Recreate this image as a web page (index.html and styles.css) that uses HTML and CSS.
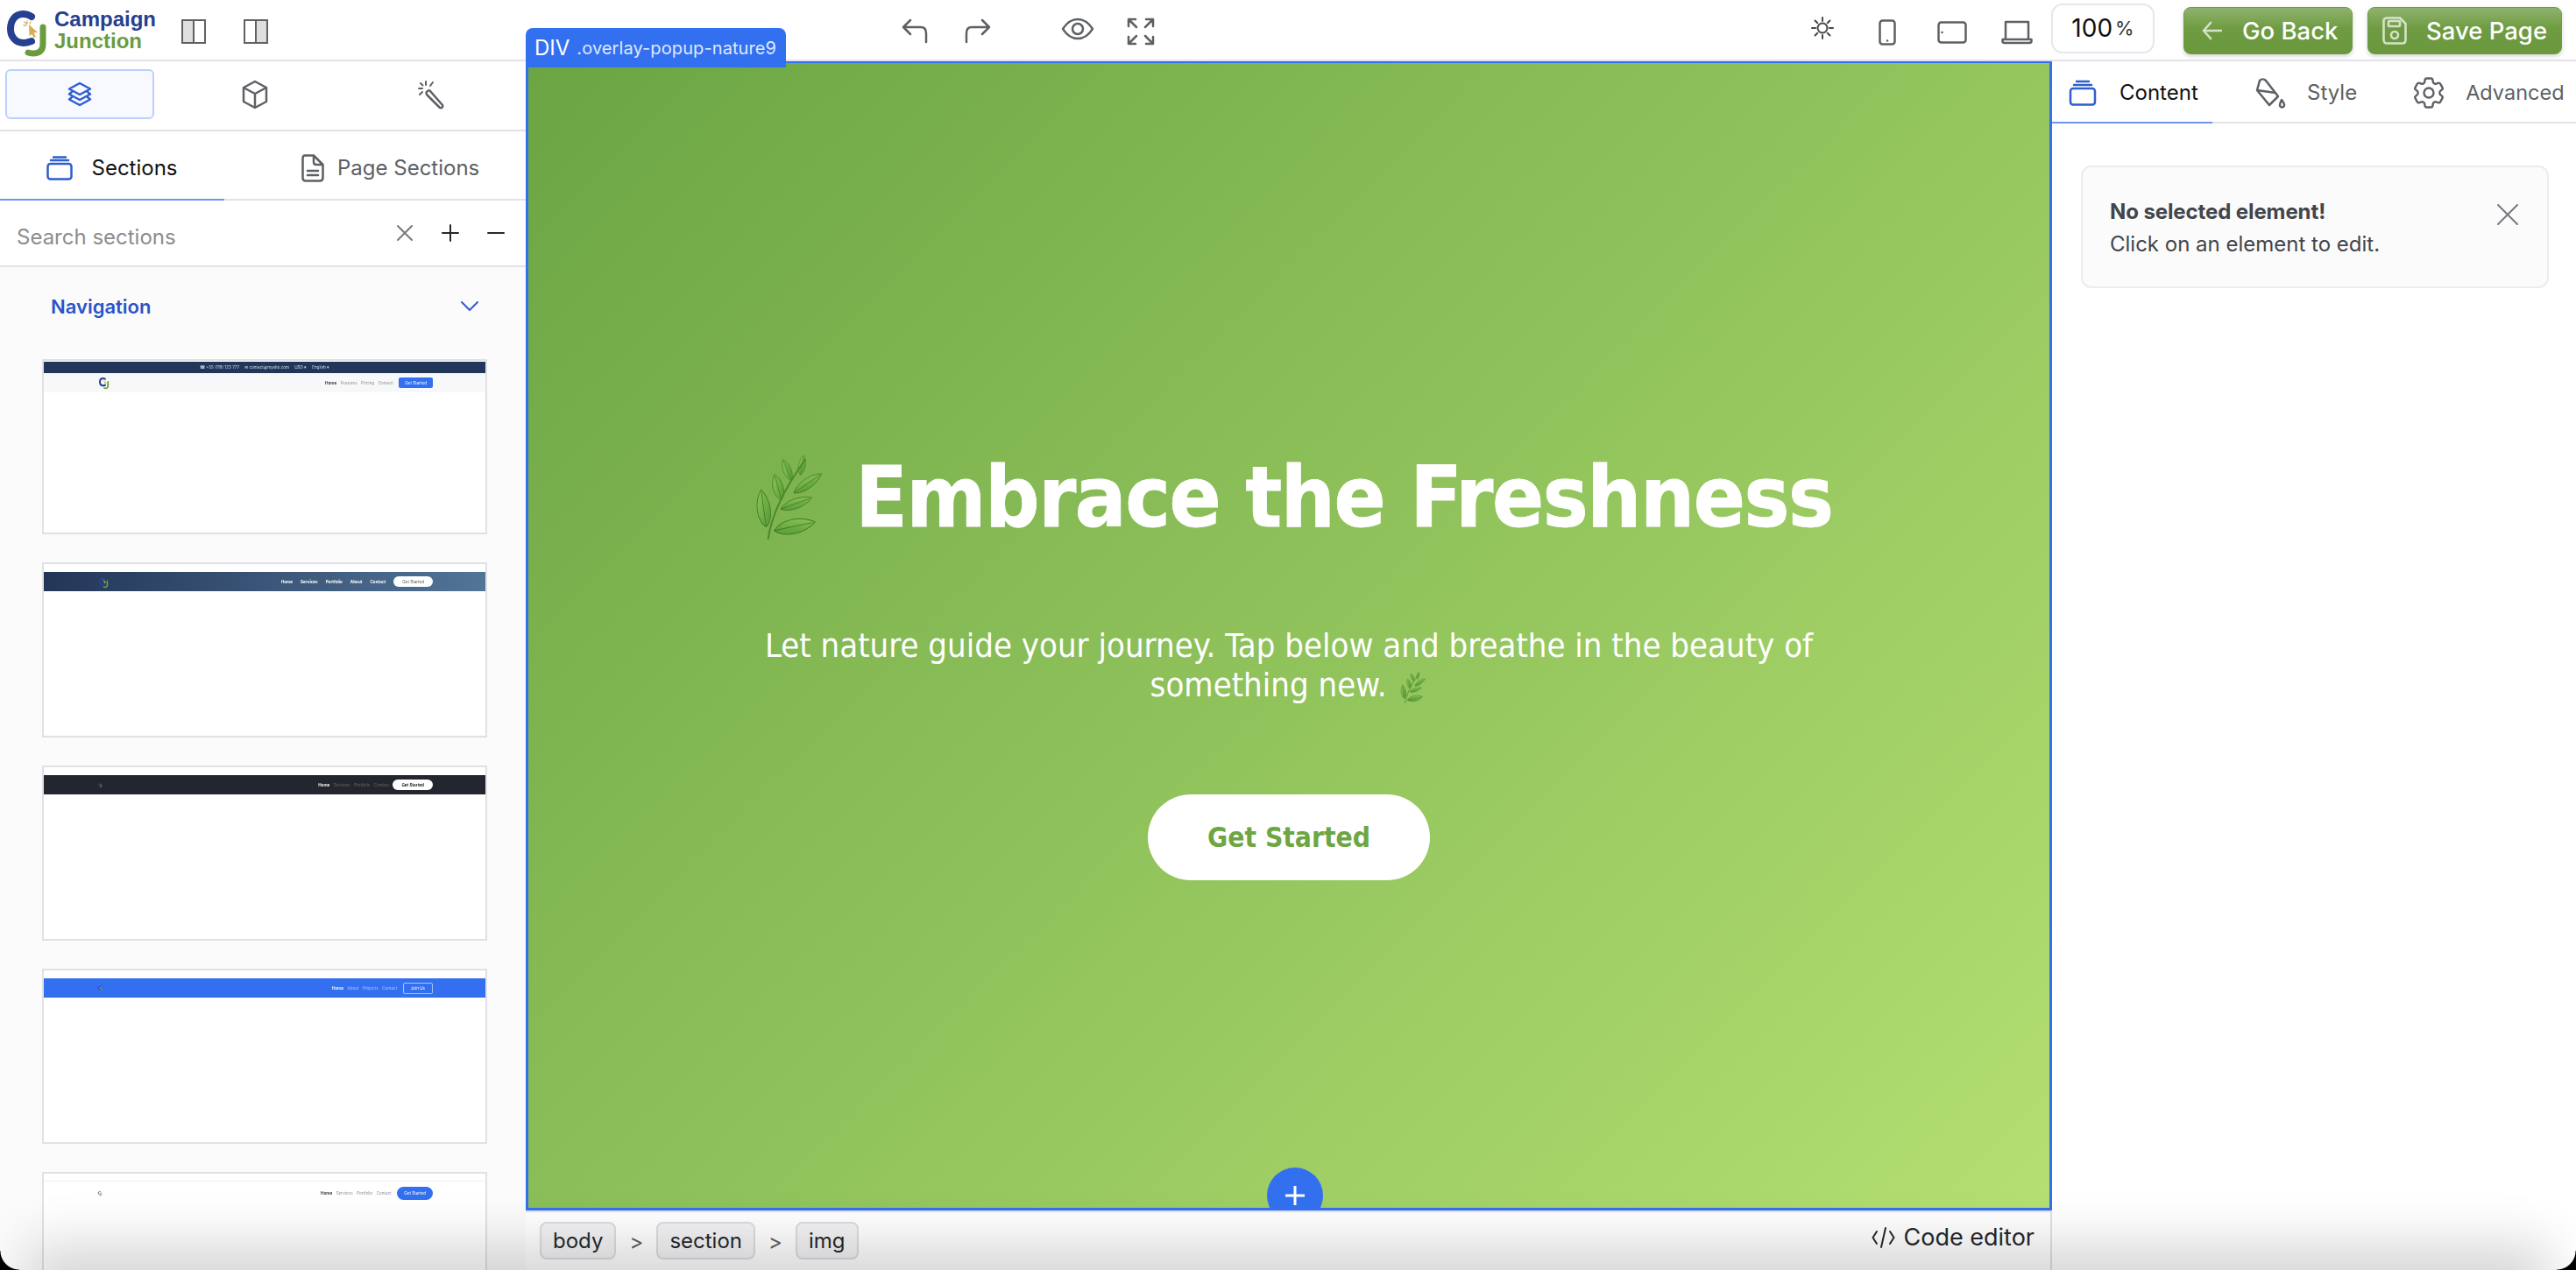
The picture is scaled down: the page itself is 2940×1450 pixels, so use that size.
FILE: index.html

```html
<!DOCTYPE html>
<html lang="en">
<head>
    <meta charset="UTF-8">
    <title>Campaign Junction - Page Builder</title>
    <link rel="stylesheet" href="styles.css">
</head>
<body>
    <svg class="sprite" aria-hidden="true">
        <defs>
            <symbol id="cj-mark" viewBox="0 0 60 62">
                <path d="M36 14 C32 11 29 11 26 11 C17 11 12 19 12 28 C12 37 18 44 27 44 C30 44 33 43 36 42" fill="none" stroke="#25408f" stroke-width="8" stroke-linecap="round"/>
                <path d="M49 26 V46 C49 54 42 58 32 55" fill="none" stroke="#6a9c3f" stroke-width="7" stroke-linecap="round"/>
                <path d="M33 23 L43 32 L38.500 32.500 L41 37 L38.500 38 L36.500 34 L33.500 36 Z" fill="#d9ae4e"/>
                <path d="M31 19 V22 M27 24 H30 M28 20 L30 22 M35 20 L34 22" stroke="#d9ae4e" stroke-width="1.300" stroke-linecap="round"/>
            </symbol>
            <linearGradient id="leaf-fill" x1="0" y1="0" x2="1" y2="1">
                <stop offset="0" stop-color="#92cb5c"/>
                <stop offset="1" stop-color="#4f9330"/>
            </linearGradient>
            <path id="leaf" d="M0 0 C8 -6 9 -20 0 -30 C-9 -20 -8 -6 0 0Z M0 0 V-28" fill="url(#leaf-fill)" stroke="#3d7a23" stroke-width=".7"/>
            <symbol id="herb" viewBox="0 0 90 94">
                <use href="#leaf" transform="translate(24 80) rotate(-8) scale(1.150 1.400)"/>
                <use href="#leaf" transform="translate(33 84) rotate(78) scale(1.250 1.550)"/>
                <use href="#leaf" transform="translate(40 60) rotate(70) scale(.85 1.250)"/>
                <use href="#leaf" transform="translate(41 50) rotate(-15) scale(.9 1)"/>
                <use href="#leaf" transform="translate(55 42) rotate(55) scale(.85 1.250)"/>
                <use href="#leaf" transform="translate(52 28) rotate(-22) scale(.7 .85)"/>
                <use href="#leaf" transform="translate(62 22) rotate(10) scale(.6 .75)"/>
                <path d="M26 94 C29 70 42 40 68 4" fill="none" stroke="#4d8a2b" stroke-width="2"/>
            </symbol>
        </defs>
    </svg>

    <div class="app">
        <header class="topbar">
            <div class="top-left">
                <svg class="logo-mark" width="60" height="62"><use href="#cj-mark"/></svg>
                <div class="logo-text"><span class="logo-c">Campaign</span><span class="logo-j">Junction</span></div>
                <div class="panel-toggles">
                    <div class="toggle-cell">
                        <svg width="30" height="30" viewBox="0 0 30 30"><rect x="2" y="2" width="13" height="26" fill="#dedede"/><rect x="2" y="2" width="26" height="26" fill="none" stroke="#5f6265" stroke-width="2"/><path d="M15 2V28" stroke="#5f6265" stroke-width="2"/></svg>
                    </div>
                    <div class="toggle-cell">
                        <svg width="30" height="30" viewBox="0 0 30 30"><rect x="15" y="2" width="13" height="26" fill="#dedede"/><rect x="2" y="2" width="26" height="26" fill="none" stroke="#5f6265" stroke-width="2"/><path d="M15 2V28" stroke="#5f6265" stroke-width="2"/></svg>
                    </div>
                </div>
            </div>
            <div class="top-center">
                <div class="icon-group">
                    <div class="top-cell"><svg width="32" height="30" viewBox="0 0 32 30" class="line-icon"><path d="M11 3 L3 11 L11 19 M3 11 H23 C27 11 29 14 29 18 V28"/></svg></div>
                    <div class="top-cell"><svg width="32" height="30" viewBox="0 0 32 30" class="line-icon"><path d="M21 3 L29 11 L21 19 M29 11 H9 C5 11 3 14 3 18 V28"/></svg></div>
                </div>
                <div class="icon-group">
                    <div class="top-cell"><svg width="38" height="26" viewBox="0 0 38 26" class="line-icon"><path d="M2 13 C8 4 13 2 19 2 C25 2 30 4 36 13 C30 22 25 24 19 24 C13 24 8 22 2 13Z"/><circle cx="19" cy="13" r="6"/></svg></div>
                    <div class="top-cell"><svg width="32" height="32" viewBox="0 0 32 32" class="line-icon"><path d="M2 10 V2 H10 M2 2 L11 11 M22 2 H30 V10 M30 2 L21 11 M2 22 V30 H10 M2 30 L11 21 M30 22 V30 H22 M30 30 L21 21"/></svg></div>
                </div>
            </div>
            <div class="top-right">
                <div class="device-cell sun-cell"><svg width="28" height="28" viewBox="0 0 28 28" class="thin-icon"><circle cx="14" cy="14" r="5.500"/><path d="M14 2V6 M14 22V26 M2 14H6 M22 14H26 M5.500 5.500L8.300 8.300 M19.700 19.700L22.500 22.500 M5.500 22.500L8.300 19.700 M19.700 8.300L22.500 5.500"/></svg></div>
                <div class="device-cell"><svg width="20" height="30" viewBox="0 0 20 30" class="device-icon"><rect x="1.500" y="1.500" width="17" height="27" rx="3"/><path d="M10 24.500V24.600"/></svg></div>
                <div class="device-cell"><svg width="34" height="26" viewBox="0 0 34 26" class="device-icon"><rect x="1.500" y="1.500" width="31" height="23" rx="3"/><path d="M5.500 13V13.100"/></svg></div>
                <div class="device-cell"><svg width="36" height="28" viewBox="0 0 36 28" class="device-icon"><path d="M5 21 V2 H31 V21 M1.500 22 H34.500 V24 C34.500 25.500 33.500 26 32 26 H4 C2.500 26 1.500 25.500 1.500 24Z"/></svg></div>
                <div class="zoom-box"><span class="zoom-num">100</span><span class="zoom-pct">%</span></div>
                <button class="green-btn back-btn">
                    <svg width="24" height="24" viewBox="0 0 24 24" class="btn-icon"><path d="M11 3 L3 12 L11 21 M3 12 H23"/></svg>
                    Go Back
                </button>
                <button class="green-btn save-btn">
                    <svg width="28" height="32" viewBox="0 0 28 32" class="btn-icon"><path d="M5 1.500 H20 L26.500 8 V26 C26.500 29 25 30.500 23 30.500 H5 C3 30.500 1.500 29 1.500 26 V5 C1.500 3 3 1.500 5 1.500Z"/><rect x="7" y="5" width="13" height="6" rx="1"/><circle cx="14" cy="21" r="4"/></svg>
                    Save Page
                </button>
            </div>
        </header>

        <div class="workspace">
            <aside class="sidebar">
                <div class="mode-bar">
                    <div class="mode-btn active">
                        <svg width="32" height="32" viewBox="0 0 32 32" class="blue-icon"><path d="M16 3 L28 9.500 L16 16 L4 9.500Z M7 13 L4 15.500 L16 22 L28 15.500 L25 13 M7 19 L4 21.500 L16 28 L28 21.500 L25 19"/></svg>
                    </div>
                    <div class="mode-btn">
                        <svg width="32" height="34" viewBox="0 0 32 34" class="line-icon"><path d="M16 2 L29 9 V25 L16 32 L3 25 V9Z M3 9 L16 16 L29 9 M16 16 V32"/></svg>
                    </div>
                    <div class="mode-btn">
                        <svg width="32" height="34" viewBox="0 0 32 34" class="line-icon wand"><path d="M12 14 C13 12 15 12 16 13 L30 29 C31 31 29 33 27 32 L13 18 C12 17 11 15 12 14Z"/><path d="M11 2V6 M3 10H7 M5 4L7.500 6.500 M19 3L16 7 M4 17L7 14"/></svg>
                    </div>
                </div>

                <div class="side-tabs">
                    <div class="side-tab selected">
                        <svg width="30" height="28" viewBox="0 0 30 28" class="blue-icon"><rect x="1.500" y="9" width="27" height="17.500" rx="3"/><path d="M5 5H25 M8 1.500H22"/></svg>
                        <span>Sections</span>
                    </div>
                    <div class="side-tab">
                        <svg width="26" height="32" viewBox="0 0 26 32" class="line-icon"><path d="M4 1.500 H14 L24.500 12 V27 C24.500 29.500 23 30.500 21 30.500 H5 C3 30.500 1.500 29.500 1.500 27 V5 C1.500 3 2.500 1.500 4 1.500Z M14 1.500 V9 C14 11 15 12 17 12 H24.500 M7 19 H19 M7 24 H19"/></svg>
                        <span>Page Sections</span>
                    </div>
                </div>

                <div class="search-row">
                    <span class="search-text">Search sections</span>
                    <div class="search-actions">
                        <svg width="20" height="20" viewBox="0 0 20 20" class="thin-icon grey"><path d="M2 2L18 18 M18 2L2 18"/></svg>
                        <svg width="20" height="20" viewBox="0 0 20 20" class="thin-icon dark"><path d="M10 1V19 M1 10H19"/></svg>
                        <svg width="20" height="20" viewBox="0 0 20 20" class="thin-icon dark"><path d="M1 10H19"/></svg>
                    </div>
                </div>

                <div class="section-list">
                    <div class="group-head">
                        <span>Navigation</span>
                        <svg width="20" height="12" viewBox="0 0 20 12" class="thin-icon blue"><path d="M1 1L10 10L19 1"/></svg>
                    </div>

                    <div class="thumb">
                        <div class="mini-top">
                            <span>&#9742; +55 (119) 123 777</span><span>&#9993; contact@mysite.com</span><span>USD &#9662;</span><span>English &#9662;</span>
                        </div>
                        <div class="mini-nav light">
                            <svg class="mini-logo" width="15" height="16"><use href="#cj-mark"/></svg>
                            <div class="mini-links">
                                <b>Home</b><span>Features</span><span>Pricing</span><span>Contact</span>
                                <em class="mini-btn square">Get Started</em>
                            </div>
                        </div>
                    </div>

                    <div class="thumb">
                        <div class="mini-nav gradient spaced">
                            <svg class="mini-logo" width="14" height="15"><use href="#cj-mark"/></svg>
                            <div class="mini-links wide">
                                <b>Home</b><b>Services</b><b>Portfolio</b><b>About</b><b>Contact</b>
                                <em class="mini-btn white">Get Started</em>
                            </div>
                        </div>
                    </div>

                    <div class="thumb">
                        <div class="mini-nav dark spaced">
                            <svg class="mini-logo" width="6" height="7"><use href="#cj-mark"/></svg>
                            <div class="mini-links">
                                <b>Home</b><span>Services</span><span>Portfolio</span><span>Contact</span>
                                <em class="mini-btn white strong">Get Started</em>
                            </div>
                        </div>
                    </div>

                    <div class="thumb">
                        <div class="mini-nav blue spaced">
                            <svg class="mini-logo" width="6" height="7"><use href="#cj-mark"/></svg>
                            <div class="mini-links">
                                <b>Home</b><span>About</span><span>Projects</span><span>Contact</span>
                                <em class="mini-btn outline">Join Us</em>
                            </div>
                        </div>
                    </div>

                    <div class="thumb">
                        <div class="mini-nav plain spaced">
                            <svg class="mini-logo" width="6" height="7"><use href="#cj-mark"/></svg>
                            <div class="mini-links">
                                <b>Home</b><span>Services</span><span>Portfolio</span><span>Contact</span>
                                <em class="mini-btn pill">Get Started</em>
                            </div>
                        </div>
                    </div>
                </div>
            </aside>

            <main class="canvas-col">
                <div class="stage">
                    <h1 class="hero-title"><svg class="herb-big" width="92" height="96"><use href="#herb"/></svg>Embrace the Freshness</h1>
                    <p class="hero-text">Let nature guide your journey. Tap below and breathe in the beauty of something new. <svg class="herb-small" width="36" height="36"><use href="#herb"/></svg></p>
                    <a class="hero-btn">Get Started</a>
                    <div class="add-btn"><svg width="26" height="26" viewBox="0 0 26 26"><path d="M13 2V24 M2 13H24" stroke="#fff" stroke-width="3"/></svg></div>
                </div>
                <div class="path-bar">
                    <span class="chip">body</span><span class="sep">&gt;</span>
                    <span class="chip">section</span><span class="sep">&gt;</span>
                    <span class="chip">img</span>
                    <div class="code-link">
                        <svg width="27" height="28" viewBox="0 0 27 28" class="thin-icon dark"><path d="M6 7L1.500 14L6 21 M21 7L25.500 14L21 21 M16 3L11 25"/></svg>
                        Code editor
                    </div>
                </div>
                <div class="tag-label"><span class="tag-name">DIV</span><span class="tag-class">.overlay-popup-nature9</span></div>
            </main>

            <aside class="props">
                <div class="props-tabs">
                    <div class="props-tab selected">
                        <svg width="32" height="30" viewBox="0 0 32 30" class="blue-icon"><rect x="2" y="10" width="28" height="18.500" rx="3"/><path d="M6 6H26 M9 2H23"/></svg>
                        <span>Content</span>
                    </div>
                    <div class="props-tab style-tab">
                        <svg width="36" height="36" viewBox="0 0 36 36" class="line-icon"><path d="M6 4 L3 15 L17 32 L27 22 L13 4 C11 2 8 2 6 4Z M3 15 L24 18"/><path d="M31 26 C34 30 35 32 33 34 C31 35 29 34 29 32 C29 30 30 28 31 26Z"/></svg>
                        <span>Style</span>
                    </div>
                    <div class="props-tab adv-tab">
                        <svg width="44" height="44" viewBox="0 0 24 24" class="gear-icon"><path d="M9.594 3.94c.09-.542.56-.94 1.11-.94h2.593c.55 0 1.02.398 1.11.94l.213 1.281c.063.374.313.686.645.87.074.04.147.083.22.127.325.196.72.257 1.075.124l1.217-.456a1.125 1.125 0 0 1 1.37.49l1.296 2.247a1.125 1.125 0 0 1-.26 1.431l-1.003.827c-.293.241-.438.613-.43.992a7.723 7.723 0 0 1 0 .255c-.008.378.137.75.43.991l1.004.827c.424.35.534.955.26 1.43l-1.298 2.247a1.125 1.125 0 0 1-1.369.491l-1.217-.456c-.355-.133-.75-.072-1.076.124a6.47 6.47 0 0 1-.22.128c-.331.183-.581.495-.644.869l-.213 1.281c-.09.543-.56.94-1.11.94h-2.594c-.55 0-1.019-.398-1.11-.94l-.213-1.281c-.062-.374-.312-.686-.644-.87a6.52 6.52 0 0 1-.22-.127c-.325-.196-.72-.257-1.076-.124l-1.217.456a1.125 1.125 0 0 1-1.369-.49l-1.297-2.247a1.125 1.125 0 0 1 .26-1.431l1.004-.827c.292-.24.437-.613.43-.991a6.932 6.932 0 0 1 0-.255c.007-.38-.138-.751-.43-.992l-1.004-.827a1.125 1.125 0 0 1-.26-1.43l1.297-2.247a1.125 1.125 0 0 1 1.37-.491l1.216.456c.356.133.751.072 1.076-.124.072-.044.146-.086.22-.128.332-.183.582-.495.644-.869l.214-1.28Z"/><circle cx="12" cy="12" r="3"/></svg>
                        <span>Advanced</span>
                    </div>
                </div>
                <div class="notice">
                    <div>
                        <strong>No selected element!</strong>
                        <p>Click on an element to edit.</p>
                    </div>
                    <svg width="26" height="26" viewBox="0 0 26 26" class="thin-icon grey"><path d="M2 2L24 24 M24 2L2 24"/></svg>
                </div>
            </aside>
        </div>

        <div class="edge-shadow"></div>
        <div class="corner corner-left"></div>
        <div class="corner corner-right"></div>
    </div>
</body>
</html>
```

FILE: styles.css

```css
* { box-sizing: border-box; }
html, body { margin: 0; height: 100%; overflow: hidden; background: #fff; }
body { font-family: Inter, "Liberation Sans", sans-serif; color: #111; }
.sprite { position: absolute; width: 0; height: 0; }

.app { position: relative; width: 2940px; height: 1450px; overflow: hidden; display: flex; flex-direction: column; }

.line-icon { fill: none; stroke: #5d6064; stroke-width: 2.500; stroke-linecap: round; stroke-linejoin: round; }
.line-icon.wand path:last-child { stroke-width: 2; }
.blue-icon { fill: none; stroke: #2f5ecf; stroke-width: 2.500; stroke-linecap: round; stroke-linejoin: round; }
.device-icon { fill: none; stroke: #5d6064; stroke-width: 2.500; stroke-linecap: round; stroke-linejoin: round; }
.gear-icon { fill: none; stroke: #5d6064; stroke-width: 1.300; stroke-linecap: round; stroke-linejoin: round; }
.thin-icon { fill: none; stroke: #44474b; stroke-width: 2; stroke-linecap: round; stroke-linejoin: round; }
.thin-icon.grey { stroke: #77797d; }
.thin-icon.dark { stroke: #26282b; }
.thin-icon.blue { stroke: #2f5ecf; }

/* top bar */
.topbar { height: 70px; flex: none; display: flex; align-items: center; border-bottom: 2px solid #e2e2e8; background: #fff; }
.top-left { width: 1008px; display: flex; align-items: center; }
.logo-mark { margin-top: 4px; }
.logo-text { display: flex; flex-direction: column; margin-left: 2px; font-family: "Liberation Sans", sans-serif; font-weight: 700; font-size: 24px; line-height: 25px; }
.logo-c { color: #25408f; }
.logo-j { color: #6a9c3f; }
.panel-toggles { display: flex; margin-left: 7px; padding-top: 3px; }
.toggle-cell { width: 71px; display: flex; justify-content: center; }
.top-center { display: flex; gap: 42px; padding-top: 3px; }
.icon-group { display: flex; }
.top-cell { width: 72px; display: flex; justify-content: center; }
.top-right { margin-left: auto; padding-right: 16px; display: flex; align-items: center; }
.device-cell { width: 74px; display: flex; justify-content: center; padding-top: 6px; }
.sun-cell { padding-top: 0; padding-bottom: 4px; }
.zoom-box { width: 118px; height: 57px; margin-left: 2px; margin-top: -4px; border: 2px solid #e6e6eb; border-radius: 13px; display: flex; align-items: center; justify-content: center; gap: 3px; }
.zoom-num { font-size: 28px; }
.zoom-pct { font-size: 22px; color: #333; }
.green-btn { height: 54px; margin-top: 2px; border: 1px solid #6e9c44; border-radius: 8px; color: #fff; font-family: Inter, sans-serif; font-size: 27.500px; font-weight: 500; display: flex; align-items: center; background: linear-gradient(#8fb26c, #6f9c42 45%, #6a983d); box-shadow: 0 2px 5px rgba(0, 0, 0, .18); }
.back-btn { width: 193px; margin-left: 33px; padding: 0 0 0 19px; gap: 23px; }
.save-btn { width: 222px; margin-left: 17px; padding: 0 0 0 16px; gap: 22px; }
.btn-icon { fill: none; stroke: #d5e2c7; stroke-width: 2.600; stroke-linecap: round; stroke-linejoin: round; }

/* main columns */
.workspace { flex: 1; min-height: 0; display: grid; grid-template-columns: 600px 1742px 598px; }

/* left sidebar */
.sidebar { display: flex; flex-direction: column; min-height: 0; overflow: hidden; }
.mode-bar { height: 80px; flex: none; display: grid; grid-template-columns: repeat(3, 170px); gap: 30px; padding: 9px 0 0 6px; border-bottom: 2px solid #e2e2e8; }
.mode-btn { height: 57px; display: flex; align-items: center; justify-content: center; border: 2px solid transparent; border-radius: 6px; }
.mode-btn.active { background: #f7f9ff; border-color: #bcd0fb; }
.side-tabs { height: 79px; flex: none; display: grid; grid-template-columns: 256px 1fr; border-bottom: 2px solid #e2e2e8; }
.side-tab { display: flex; align-items: center; justify-content: center; gap: 21px; padding-top: 6px; font-size: 24px; color: #5d6064; margin-bottom: -2px; border-bottom: 2px solid transparent; }
.side-tab.selected { color: #111; border-bottom-color: #6d94f2; }
.side-tab:last-child { gap: 15px; justify-content: flex-start; padding-left: 88px; }
.search-row { height: 76px; flex: none; display: flex; align-items: center; justify-content: space-between; padding: 0 24px 0 19px; border-bottom: 2px solid #e2e2e8; }
.search-text { font-size: 24px; color: #8b8d90; margin-top: 8px; }
.search-actions { display: flex; gap: 32px; }
.section-list { flex: 1; background: #fbfbfc; padding-left: 48px; }
.group-head { width: 498px; height: 90px; margin-bottom: 15px; padding: 0 0 0 10px; display: flex; align-items: center; justify-content: space-between; color: #2a55c8; font-size: 22px; font-weight: 600; }
.thumb { width: 508px; height: 200px; margin-bottom: 32px; background: #fff; border: 2px solid #e0e0e6; padding-top: 7px; }

/* navbars inside the thumbnails */
.mini-top { height: 13px; display: flex; justify-content: center; align-items: center; gap: 6px; font-size: 4.600px; color: #d8deea; background: #22365a; filter: blur(.3px); margin-top: -6px; white-space: nowrap; }
.mini-nav { height: 22px; display: flex; align-items: center; justify-content: space-between; padding: 0 60px 0 61px; filter: blur(.3px); }
.mini-nav.spaced { margin-top: 2px; }
.mini-links { display: flex; align-items: center; gap: 4.500px; font-size: 4.600px; color: #8d9096; white-space: nowrap; }
.mini-links.wide { gap: 9px; color: #fff; }
.mini-links b { color: #3a3d42; }
.mini-links em { font-style: normal; }
.mini-btn { margin-left: 2px; padding: 2px 7px; border-radius: 6px; color: #fff; }
.mini-nav.light { background: #f6f8fa; }
.mini-btn.square { background: #3370f0; border-radius: 2px; padding: 3.500px 7px; }
.mini-nav.gradient { background: linear-gradient(100deg, #223557, #527598); }
.mini-nav.gradient .mini-links b { color: #fff; }
.mini-btn.white { background: #fff; color: #555; margin-left: 0; padding: 3.500px 10px; border-radius: 7px; }
.mini-btn.strong { color: #222; font-weight: 700; }
.mini-nav.dark { background: #23262e; margin-top: 2px; }
.mini-nav.dark .mini-links { color: #666; }
.mini-nav.dark .mini-links b { color: #eee; }
.mini-nav.blue { background: #3370f0; }
.mini-nav.blue .mini-links { color: #a9c4f8; }
.mini-nav.blue .mini-links b { color: #e8efff; }
.mini-btn.outline { border: 1px solid #a9c4f8; border-radius: 2px; color: #fff; padding: 3px 8px; }
.mini-nav.plain { border-top: 1px solid #eef0f2; height: 28px; margin-top: 1px; }
.mini-btn.pill { background: #3370f0; padding: 5px 8px; border-radius: 8px; }

/* canvas */
.canvas-col { position: relative; display: flex; flex-direction: column; min-height: 0; }
.stage { position: relative; flex: 1; min-height: 0; display: flex; flex-direction: column; align-items: center; padding-top: 441px; border: 3px solid #3370f0; border-top-width: 2px; background: linear-gradient(135deg, #6ba544, #b4df72); color: #fff; font-family: "DejaVu Sans", sans-serif; }
.hero-title { margin: 0; display: flex; align-items: center; gap: 34px; font-size: 97px; line-height: 110px; font-weight: 700; font-stretch: condensed; letter-spacing: -1.400px; white-space: nowrap; -webkit-text-stroke: .8px #fff; }
.hero-text { width: 1240px; margin: 92px 0 0; text-align: center; font-size: 38px; line-height: 45px; font-stretch: condensed; }
.herb-small { vertical-align: -8px; }
.hero-btn { width: 322px; height: 98px; margin-top: 102px; border-radius: 49px; background: #fff; color: #6ea644; font-size: 31.500px; font-weight: 700; font-stretch: condensed; display: flex; align-items: center; justify-content: center; }
.add-btn { position: absolute; left: 843px; bottom: -18px; width: 64px; height: 64px; border-radius: 50%; background: #3370f0; display: flex; align-items: center; justify-content: center; clip-path: inset(0 0 18px 0); }
.path-bar { height: 68px; flex: none; display: flex; align-items: center; padding: 0 16px; background: #fff; border-top: 2px solid #e0e0e6; border-right: 2px solid #e0e0e6; font-size: 24px; color: #26282b; }
.chip { height: 43px; margin-top: -2px; padding: 0 13px; display: flex; align-items: center; background: #f3f3f5; border: 2px solid #dcdce0; border-radius: 8px; }
.sep { width: 46px; text-align: center; color: #5d6064; }
.code-link { margin-left: auto; display: flex; align-items: center; gap: 9px; font-size: 27px; padding-right: 2px; margin-top: -9px; }
.tag-label { position: absolute; left: 0; top: -38px; height: 45px; width: 297px; display: flex; align-items: center; gap: 8px; padding-left: 10px; background: #3370f0; border-radius: 8px 8px 0 0; color: #fff; }
.tag-name { font-size: 24px; }
.tag-class { font-size: 20px; color: #dfe8fd; letter-spacing: .1px; }

/* right panel */
.props { background: #fff; }
.props-tabs { height: 71px; display: flex; padding-top: 2px; border-bottom: 2px solid #e2e2e8; font-size: 24px; color: #5d6064; }
.props-tab { display: flex; align-items: center; gap: 24px; }
.props-tab.selected { width: 183px; gap: 26px; padding-left: 19px; color: #111; margin-bottom: -2px; border-bottom: 2px solid #6d94f2; }
.style-tab { margin-left: 48px; }
.adv-tab { margin-left: 60px; gap: 20px; }
.adv-tab span { font-size: 23.500px; }
.notice { width: 534px; height: 140px; margin: 48px 0 0 33px; padding: 2px 32px 0 31px; display: flex; align-items: center; justify-content: space-between; background: #fbfbfc; border: 2px solid #ececf0; border-radius: 12px; font-size: 24px; color: #42454a; }
.notice strong { display: block; font-weight: 700; letter-spacing: -.1px; }
.notice p { margin: 8px 0 0; }
.notice svg { margin-bottom: 30px; }

/* window edge */
.edge-shadow { position: absolute; left: 60px; right: 60px; bottom: -30px; height: 30px; box-shadow: 0 0 60px 30px rgba(0, 0, 0, .16); pointer-events: none; }
.corner { position: absolute; bottom: 0; width: 22px; height: 22px; }
.corner-left { left: 0; background: radial-gradient(circle at top right, transparent 21px, #000 22px); }
.corner-right { right: 0; background: radial-gradient(circle at top left, transparent 21px, #000 22px); }
```
